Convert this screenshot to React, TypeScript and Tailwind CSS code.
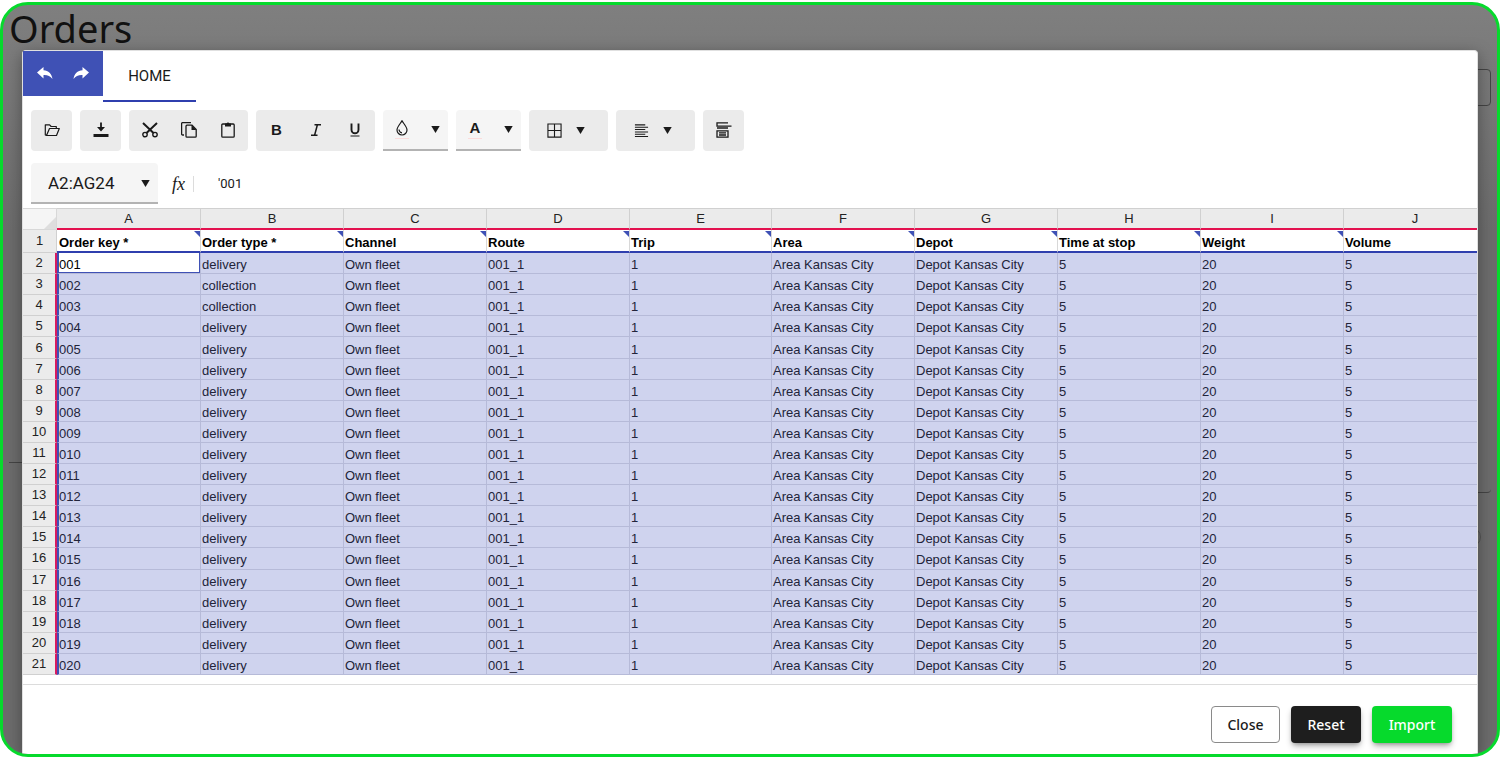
import type { ReactNode } from "react";

const COLUMNS = ["A", "B", "C", "D", "E", "F", "G", "H", "I", "J"];

const FIELDS = [
  "Order key *",
  "Order type *",
  "Channel",
  "Route",
  "Trip",
  "Area",
  "Depot",
  "Time at stop",
  "Weight",
  "Volume",
];

const ORDERS = Array.from({ length: 20 }, (_, i) => [
  String(i + 1).padStart(3, "0"),
  i === 1 || i === 2 ? "collection" : "delivery",
  "Own fleet",
  "001_1",
  "1",
  "Area Kansas City",
  "Depot Kansas City",
  "5",
  "20",
  "5",
]);

interface IconProps {
  children: ReactNode;
  className?: string;
}

function Icon({ children, className = "size-4" }: IconProps) {
  return (
    <svg
      viewBox="0 0 16 16"
      className={className}
      fill="none"
      stroke="currentColor"
      strokeWidth="1.2"
      aria-hidden="true"
    >
      {children}
    </svg>
  );
}

function Caret() {
  return (
    <svg viewBox="0 0 9 7" className="h-[7px] w-[9px]" fill="currentColor" aria-hidden="true">
      <path d="M.3 0h8.400L4.500 7z" />
    </svg>
  );
}

interface ToolButtonProps {
  label: string;
  children: ReactNode;
}

function ToolButton({ label, children }: ToolButtonProps) {
  return (
    <button
      type="button"
      aria-label={label}
      className="flex h-10 w-[39px] items-center justify-center hover:bg-black/5"
    >
      {children}
    </button>
  );
}

function ToolGroup({ children }: { children: ReactNode }) {
  return (
    <div className="flex h-[41px] min-w-[41px] justify-center rounded bg-[#ebebeb] px-px">
      {children}
    </div>
  );
}

function ColorButton({ label, children }: ToolButtonProps) {
  return (
    <button
      type="button"
      aria-label={label}
      className="flex h-[41px] w-[65px] items-center justify-between rounded-t border-b-2 border-[#b3b3b3] bg-[#f5f5f5] pr-2 pl-2.5"
    >
      <span className="flex flex-col items-center gap-0.5">
        {children}
        <span className="h-px w-3.5 bg-[#fbdcdc]" />
      </span>
      <Caret />
    </button>
  );
}

function MenuButton({ label, children }: ToolButtonProps) {
  return (
    <button
      type="button"
      aria-label={label}
      className="flex h-[41px] w-[79px] items-center gap-3.5 rounded bg-[#ebebeb] pl-[18px]"
    >
      {children}
      <Caret />
    </button>
  );
}

function Toolbar() {
  return (
    <div role="toolbar" aria-label="Formatting" className="flex gap-2 px-2 pt-2">
      <ToolGroup>
        <ToolButton label="Open">
          <Icon>
            <path
              d="M2.500 13.500L1.300 13V2.800h4.300l1.500 1.700h5.200v2M2.500 13.500l3-7h9.800l-2.800 7z"
              strokeLinejoin="round"
            />
          </Icon>
        </ToolButton>
      </ToolGroup>
      <ToolGroup>
        <ToolButton label="Download">
          <Icon>
            <path d="M8 .5v5" strokeWidth="1.800" />
            <path d="M4 5h8L8 9.500zM.5 12h15v3H.5z" fill="currentColor" stroke="none" />
          </Icon>
        </ToolButton>
      </ToolGroup>
      <ToolGroup>
        <ToolButton label="Cut">
          <Icon>
            <path d="M1 1l10.500 10M15 1L4.500 11" strokeWidth="2" />
            <circle cx="3" cy="12.600" r="2.200" strokeWidth="1.400" />
            <circle cx="13" cy="12.600" r="2.200" strokeWidth="1.400" />
          </Icon>
        </ToolButton>
        <ToolButton label="Copy">
          <Icon>
            <path d="M3 13H1.600a1 1 0 01-1-1V1.600a1 1 0 011-1H10" strokeWidth="1.300" />
            <path
              d="M6 3.200h5l4.200 4.200v6.800a1 1 0 01-1 1H6a1 1 0 01-1-1V4.200a1 1 0 011-1z"
              strokeWidth="1.300"
            />
            <path d="M10.500 3l5 5h-5z" fill="currentColor" stroke="none" />
          </Icon>
        </ToolButton>
        <ToolButton label="Paste">
          <Icon>
            <path
              d="M2.800 2h10.400a1 1 0 011 1v11.200a1 1 0 01-1 1H2.800a1 1 0 01-1-1V3a1 1 0 011-1z"
              strokeWidth="1.300"
            />
            <path d="M5 1.500h1.500a1.600 1.600 0 013 0H11V4.600H5z" fill="currentColor" stroke="none" />
          </Icon>
        </ToolButton>
      </ToolGroup>
      <ToolGroup>
        <ToolButton label="Bold">
          <span className="font-['Liberation_Sans',Arial,sans-serif] text-[15px] font-bold">B</span>
        </ToolButton>
        <ToolButton label="Italic">
          <Icon>
            <path d="M6.500 2.800h6.500M3 13.200h6.500M9.400 2.800L6.600 13.200" strokeWidth="1.500" />
          </Icon>
        </ToolButton>
        <ToolButton label="Underline">
          <Icon>
            <path d="M4.500 1.500v6.300a3.500 3.500 0 007 0V1.500" strokeWidth="1.900" />
            <path d="M3.500 14h9" />
          </Icon>
        </ToolButton>
      </ToolGroup>
      <ColorButton label="Fill colour">
        <Icon className="h-4 w-[18px]">
          <path d="M8 .8C6.500 3.500 3 6.800 3 10a5 5 0 0010 0C13 6.800 9.500 3.500 8 .8z" />
          <path d="M5 9.500c.2 2 1.200 3 3 3.300" />
        </Icon>
      </ColorButton>
      <ColorButton label="Text colour">
        <span className="h-4 w-[18px] font-['Liberation_Sans',Arial,sans-serif] text-[15px] leading-4 font-bold">
          A
        </span>
      </ColorButton>
      <MenuButton label="Borders">
        <Icon className="size-[15px]">
          <path d="M1 1h14v14H1zM8 1v14M1 8h14" />
        </Icon>
      </MenuButton>
      <MenuButton label="Align">
        <Icon className="size-[15px]">
          <path d="M1 2h11M1 4.500h14M1 7h11M1 9.500h14M1 12h11M1 14.500h14" strokeWidth="1.100" />
        </Icon>
      </MenuButton>
      <ToolGroup>
        <ToolButton label="Validation">
          <Icon>
            <path d="M12 .9H1v3.200h14.500M1 6h11" strokeWidth="1.300" />
            <path d="M1 8.800h11v6.400H1zM3 10.900h7M3 13h7" strokeWidth="1.300" />
          </Icon>
        </ToolButton>
      </ToolGroup>
    </div>
  );
}

function FormulaBar() {
  return (
    <div className="flex h-[57px] items-center px-2 pt-2">
      <div className="relative">
        <select
          aria-label="Cell range"
          className="block h-[41px] w-[127px] appearance-none rounded-t border-b-2 border-[#b3b3b3] bg-[#f5f5f5] pt-0.5 pl-[17px] text-[17px]"
        >
          <option>A2:AG24</option>
        </select>
        <span className="pointer-events-none absolute inset-y-0 right-2 flex items-center">
          <Caret />
        </span>
      </div>
      <label
        htmlFor="formula"
        className="ml-3.5 w-[22px] border-r border-[#dcdcdc] font-['Liberation_Serif',serif] text-lg leading-4 italic"
      >
        fx
      </label>
      <input
        id="formula"
        defaultValue="'001"
        className="ml-6 min-w-0 flex-1 text-[13px] outline-none"
      />
    </div>
  );
}

function Sheet() {
  return (
    <div className="overflow-hidden font-['Liberation_Sans',Arial,sans-serif] text-[13px] leading-4 text-[#222]">
      <table className="h-[467px] w-[1464px] table-fixed border-separate border-spacing-0">
        <colgroup>
          <col className="w-[34px]" />
          <col className="w-36" />
          {COLUMNS.slice(1).map((name) => (
            <col key={name} className={name === "E" ? "w-[142px]" : "w-[143px]"} />
          ))}
        </colgroup>
        <thead>
          <tr className="h-[22px] bg-[#ebebeb]">
            <td className="relative border-y border-r border-[#d8d8d8] bg-[#f5f5f5] p-0">
              <svg
                viewBox="0 0 12 12"
                className="absolute right-0 bottom-0 size-3 fill-[#dedede]"
                aria-hidden="true"
              >
                <path d="M12 0v12H0z" />
              </svg>
            </td>
            {COLUMNS.map((name) => (
              <th
                key={name}
                scope="col"
                className="border-t border-r border-b-2 border-[#d0d0d0] border-b-[#e3114f] p-0 font-normal"
              >
                {name}
              </th>
            ))}
          </tr>
        </thead>
        <tbody>
          <tr className="h-[23px]">
            <th
              scope="row"
              className="border-r border-b border-[#d0d0d0] bg-[#ebebeb] p-0 font-normal"
            >
              1
            </th>
            {FIELDS.map((field) => (
              <td
                key={field}
                className="relative border-r border-b-2 border-[#d8d8d8] border-b-[#2f3fae] p-0 pt-[5px] pl-px font-bold text-black first-of-type:pl-0.5"
              >
                {field}
                <svg
                  viewBox="0 0 6 6"
                  className="absolute top-px right-0 size-1.5 fill-[#3f51b5]"
                  aria-hidden="true"
                >
                  <path d="M0 0h6v6z" />
                </svg>
              </td>
            ))}
          </tr>
          {ORDERS.map((order, row) => (
            <tr key={order[0]} className="h-[21px]">
              <th
                scope="row"
                className="border-r-2 border-b border-[#d0d0d0] border-r-[#d81b60] bg-[#ebebeb] p-0 font-normal"
              >
                {row + 2}
              </th>
              {order.map((value, col) => (
                <td
                  key={COLUMNS[col]}
                  className={`border-r border-b border-[#b6bad8] p-0 pt-1 ${
                    col === 0 ? "border-l-2 border-l-[#3f51b5]" : "pl-px"
                  } ${
                    row === 0 && col === 0
                      ? "bg-white text-black shadow-[inset_-1px_-1px_0_#3f51b5]"
                      : "bg-[#cfd3ee] text-[#22243a]"
                  }`}
                >
                  {value}
                </td>
              ))}
            </tr>
          ))}
        </tbody>
      </table>
    </div>
  );
}

function ImportDialog() {
  return (
    <div
      role="dialog"
      aria-label="Import orders"
      className="relative mx-[19px] flex flex-1 flex-col rounded-t border border-b-0 border-[#e0e0e0] bg-white font-[Roboto,sans-serif] text-[#1a1a1a] shadow-[0_4px_16px_rgba(0,0,0,0.35)]"
    >
      <div className="flex h-[51px]">
        <div className="flex h-[45px] w-20 bg-[#3f51b5] pl-1 text-white">
          <button type="button" aria-label="Undo" className="flex w-9 items-center justify-center">
            <svg viewBox="0 0 16 13" className="h-[13px] w-4" fill="currentColor" aria-hidden="true">
              <path d="M0 5.500L6.500 0v3.200c5 .3 8.300 3.500 9 8.800-2.200-3-5-4.200-9-4v3.500z" />
            </svg>
          </button>
          <button type="button" aria-label="Redo" className="flex w-9 items-center justify-center">
            <svg viewBox="0 0 16 13" className="h-[13px] w-4" fill="currentColor" aria-hidden="true">
              <path d="M16 5.500L9.500 0v3.200c-5 .3-8.300 3.500-9 8.800 2.200-3 5-4.200 9-4v3.500z" />
            </svg>
          </button>
        </div>
        <button type="button" className="w-[93px] border-b-2 border-[#2f3fae] pt-px text-[15px]">
          HOME
        </button>
      </div>
      <Toolbar />
      <FormulaBar />
      <Sheet />
      <div className="mt-[9px] flex flex-1 items-start justify-end gap-[11px] border-t border-[#dcdcdc] px-[25px] pt-[21px] font-['Noto_Sans',sans-serif] text-sm font-medium">
        <button type="button" className="h-[37px] w-[69px] rounded border border-[#8a8a8a]">
          Close
        </button>
        <button
          type="button"
          className="h-[37px] w-[70px] rounded bg-[#1e1e1e] text-white shadow-md shadow-black/30"
        >
          Reset
        </button>
        <button
          type="button"
          className="h-[37px] w-20 rounded bg-[#06da2c] text-white shadow-md shadow-black/30"
        >
          Import
        </button>
      </div>
    </div>
  );
}

export default function App() {
  return (
    <div className="flex min-h-screen flex-col bg-white pt-0.5">
      <main className="relative flex flex-1 flex-col overflow-hidden rounded-[28px] border-3 border-[#06da2c] bg-linear-to-b from-[#7f7f7f] to-[#6c6c6c] to-30%">
        <h1 className="h-[45px] pl-1.5 font-['Noto_Sans',sans-serif] text-[38px] leading-[46px] text-[#111]">
          Orders
        </h1>
        {/* page content dimmed behind the dialog */}
        <div className="absolute top-16 right-1.5 h-[37px] w-24 rounded border border-[#444]" />
        <div className="absolute top-[457px] left-1.5 h-px w-4 bg-[#444]" />
        <div className="absolute top-[400px] right-1.5 h-[88px] w-6 rounded-br border-b border-[#444]" />
        <div className="absolute top-[522px] right-4 h-5 w-5 rounded-full border border-[#555]" />
        <ImportDialog />
      </main>
    </div>
  );
}
